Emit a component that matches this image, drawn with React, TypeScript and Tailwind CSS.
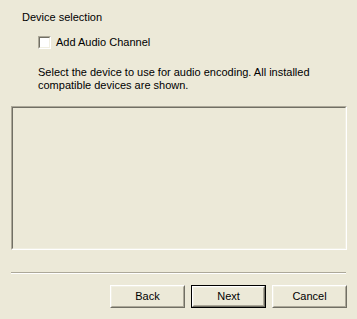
const font = { fontFamily: '"Liberation Sans", Arial, sans-serif' };

const XpButton = ({ label, isDefault }: { label: string; isDefault?: boolean }) => (
  <div className={`w-[75px] h-[23px] ${isDefault ? 'border border-black' : ''}`}>
    <div className="w-full h-full border border-t-white border-l-white border-b-[#716f64] border-r-[#716f64]">
      <div className="w-full h-full border border-t-[#f1efe2] border-l-[#f1efe2] border-b-[#aca899] border-r-[#aca899] flex items-center justify-center text-[11px] text-black bg-[#ece9d8]">
        {label}
      </div>
    </div>
  </div>
);

export default function App() {
  return (
    <div
      className="w-[357px] h-[319px] bg-[#ece9d8] flex flex-col text-[11px] leading-[13px] text-black overflow-hidden"
      style={font}
    >
      <div className="pl-[22px] pt-[11px]">Device selection</div>

      {/* checkbox */}
      <div className="pl-[38px] mt-[12px] flex items-center gap-[5px] h-[13px]">
        <div className="w-[13px] h-[13px] border border-t-[#aca899] border-l-[#aca899] border-b-white border-r-white">
          <div className="w-full h-full border border-t-[#716f64] border-l-[#716f64] border-b-[#f1efe2] border-r-[#f1efe2] bg-white" />
        </div>
        <span>Add Audio Channel</span>
      </div>

      <p className="pl-[38px] mt-[17px] w-[322px]">
        Select the device to use for audio encoding. All installed compatible devices are shown.
      </p>

      {/* device list */}
      <div className="ml-[11px] mt-[14px] w-[336px] h-[144px] border border-t-[#aca899] border-l-[#aca899] border-b-white border-r-white">
        <div className="w-full h-full border border-t-[#716f64] border-l-[#716f64] border-b-[#f1efe2] border-r-[#f1efe2] bg-[#ece9d8]" />
      </div>

      {/* separator */}
      <div className="ml-[11px] mt-[22px] w-[335px] border-t border-t-[#aca899] border-b border-b-white" />

      <div className="mt-[11px] flex justify-end gap-[6px] pr-[10px]">
        <XpButton label="Back" />
        <XpButton label="Next" isDefault />
        <XpButton label="Cancel" />
      </div>
    </div>
  );
}
